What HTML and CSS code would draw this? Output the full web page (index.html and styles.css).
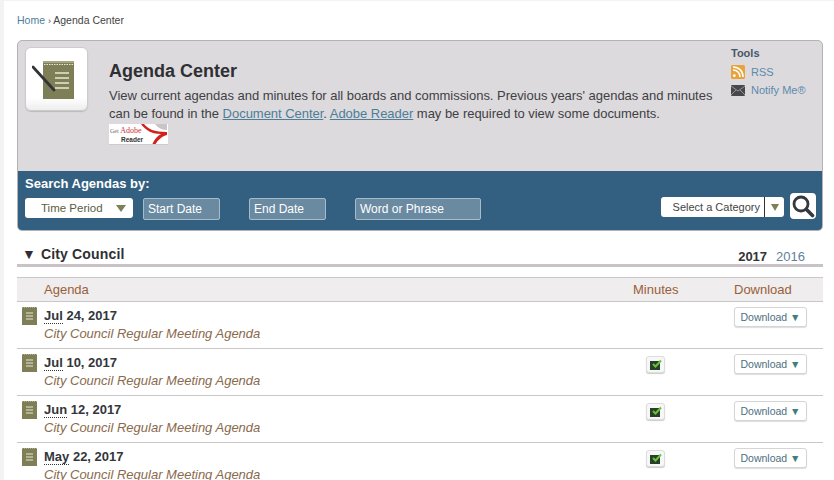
FILE: index.html
```html
<!DOCTYPE html>
<html lang="en">
<head>
  <meta charset="UTF-8">
  <title>Agenda Center</title>
  <link rel="stylesheet" href="styles.css">
</head>
<body>
  <div class="page">
    <p class="breadcrumb"><a href="#">Home</a> <span class="sep">›</span> Agenda Center</p>

    <!-- Top panel -->
    <div class="panel">
      <div class="intro">
        <div class="tile">
          <svg width="50" height="42" viewBox="0 0 50 42">
            <rect x="11" y="3" width="31" height="38" fill="#7f7f57"/>
            <path d="M11 3h31v2H11z" fill="#a5a584"/>
            <path d="M12 6.500h30" stroke="#e8e8d8" stroke-dasharray="1.500 1"/>
            <path d="M23 15h14M23 20h14M23 25h14M23 30h14" stroke="#e9e9d3" stroke-width="1.300"/>
            <path d="M1 9l21 23" stroke="#33333a" stroke-width="2.800" stroke-linecap="round"/>
          </svg>
        </div>
        <div class="intro-text">
          <h1>Agenda Center</h1>
          <p>View current agendas and minutes for all boards and commissions. Previous years' agendas and minutes can be found in the <a href="#">Document Center</a>. <a href="#">Adobe Reader</a> may be required to view some documents.</p>
          <div class="adobe">
            <span class="adobe-get">Get <em>Adobe</em></span>
            <span class="adobe-name">Reader</span>
            <svg class="adobe-swoosh" width="59" height="21" viewBox="0 0 59 21">
              <path d="M35 0c4 5 10 8 23 8v3c-5 1-9 5-12 10h-3c2-5 5-9 9-11-8 0-15-3-20-10z" fill="#d3201f"/>
              <path d="M46 0h12v6c-5 0-9-2-12-6z" fill="#c9c5c5"/>
            </svg>
          </div>
        </div>
        <div class="tools">
          <h2>Tools</h2>
          <a href="#" class="tool">
            <svg width="14" height="14" viewBox="0 0 14 14">
              <rect width="14" height="14" rx="1.500" fill="#e8a33d"/>
              <path d="M2 5c4 0 7 3 7 7M2 2c6 0 10 4 10 10" stroke="#fff" stroke-width="1.600" fill="none"/>
              <circle cx="3.300" cy="10.700" r="1.400" fill="#fff"/>
            </svg>
            RSS
          </a>
          <a href="#" class="tool">
            <svg width="14" height="11" viewBox="0 0 14 11">
              <rect width="14" height="11" rx="1" fill="#48484c"/>
              <path d="M0 1l7 5 7-5M0 10l5-5M14 10L9 5" stroke="#aaa" stroke-width="0.800" fill="none"/>
            </svg>
            Notify Me®
          </a>
        </div>
      </div>

      <div class="search">
        <h3>Search Agendas by:</h3>
        <div class="search-row">
          <div class="period">Time Period <span class="arrow"></span></div>
          <div class="field field-date">Start Date</div>
          <div class="field field-date">End Date</div>
          <div class="field field-word">Word or Phrase</div>
          <div class="category"><span class="category-label">Select a Category</span><span class="category-arrow"><span class="arrow arrow-small"></span></span></div>
          <div class="search-btn">
            <svg width="24" height="24" viewBox="0 0 24 24">
              <circle cx="10" cy="10" r="7" fill="none" stroke="#333a3f" stroke-width="2.800"/>
              <path d="M15.500 15.500l6 6" stroke="#333a3f" stroke-width="3.600" stroke-linecap="round"/>
            </svg>
          </div>
        </div>
      </div>
    </div>

    <!-- City Council -->
    <div class="section-head">
      <h2><span class="toggle">▼</span>City Council</h2>
      <div class="years"><strong>2017</strong><a href="#">2016</a></div>
    </div>

    <table class="agendas">
      <thead>
        <tr>
          <th class="col-agenda">Agenda</th>
          <th class="col-minutes">Minutes</th>
          <th class="col-download">Download</th>
        </tr>
      </thead>
      <tbody>
        <tr>
          <td class="col-agenda">
            <svg class="note" width="15" height="18" viewBox="0 0 15 18"><rect width="15" height="18" fill="#7f7f57"/><path d="M0 .5h15" stroke="#b0b094" stroke-dasharray="1 1"/><path d="M4 6h7M4 9h7M4 12h7" stroke="#e9e9d3"/></svg>
            <div class="date"><abbr>Jul</abbr> 24, 2017</div>
            <div class="title">City Council Regular Meeting Agenda</div>
          </td>
          <td class="col-minutes"></td>
          <td class="col-download"><span class="download">Download <span class="tri">▼</span></span></td>
        </tr>
        <tr>
          <td class="col-agenda">
            <svg class="note" width="15" height="18" viewBox="0 0 15 18"><rect width="15" height="18" fill="#7f7f57"/><path d="M0 .5h15" stroke="#b0b094" stroke-dasharray="1 1"/><path d="M4 6h7M4 9h7M4 12h7" stroke="#e9e9d3"/></svg>
            <div class="date"><abbr>Jul</abbr> 10, 2017</div>
            <div class="title">City Council Regular Meeting Agenda</div>
          </td>
          <td class="col-minutes"><span class="minutes-btn"><svg width="12" height="11" viewBox="0 0 12 11"><rect y="2" width="10" height="9" fill="#26402a"/><path d="M3 5l2.500 2.500L11 1.500" stroke="#6fbf3a" stroke-width="2" fill="none"/></svg></span></td>
          <td class="col-download"><span class="download">Download <span class="tri">▼</span></span></td>
        </tr>
        <tr>
          <td class="col-agenda">
            <svg class="note" width="15" height="18" viewBox="0 0 15 18"><rect width="15" height="18" fill="#7f7f57"/><path d="M0 .5h15" stroke="#b0b094" stroke-dasharray="1 1"/><path d="M4 6h7M4 9h7M4 12h7" stroke="#e9e9d3"/></svg>
            <div class="date"><abbr>Jun</abbr> 12, 2017</div>
            <div class="title">City Council Regular Meeting Agenda</div>
          </td>
          <td class="col-minutes"><span class="minutes-btn"><svg width="12" height="11" viewBox="0 0 12 11"><rect y="2" width="10" height="9" fill="#26402a"/><path d="M3 5l2.500 2.500L11 1.500" stroke="#6fbf3a" stroke-width="2" fill="none"/></svg></span></td>
          <td class="col-download"><span class="download">Download <span class="tri">▼</span></span></td>
        </tr>
        <tr>
          <td class="col-agenda">
            <svg class="note" width="15" height="18" viewBox="0 0 15 18"><rect width="15" height="18" fill="#7f7f57"/><path d="M0 .5h15" stroke="#b0b094" stroke-dasharray="1 1"/><path d="M4 6h7M4 9h7M4 12h7" stroke="#e9e9d3"/></svg>
            <div class="date"><abbr>May</abbr> 22, 2017</div>
            <div class="title">City Council Regular Meeting Agenda</div>
          </td>
          <td class="col-minutes"><span class="minutes-btn"><svg width="12" height="11" viewBox="0 0 12 11"><rect y="2" width="10" height="9" fill="#26402a"/><path d="M3 5l2.500 2.500L11 1.500" stroke="#6fbf3a" stroke-width="2" fill="none"/></svg></span></td>
          <td class="col-download"><span class="download">Download <span class="tri">▼</span></span></td>
        </tr>
      </tbody>
    </table>
  </div>
</body>
</html>
```

FILE: styles.css
```css
html, body {
  height: 480px;
  overflow: hidden;
}
body {
  margin: 0;
  background: #f3f3f3;
  font-family: "Liberation Sans", Arial, sans-serif;
  color: #333;
}
a {
  color: #4d7d97;
}
.page {
  margin: 1px 0 0 4px;
  background: #fff;
  padding: 13px 11px 0 13px;
  height: 466px;
}
.breadcrumb {
  height: 12px;
  margin: 0 0 14px;
  font-size: 10.500px;
  line-height: 12px;
  color: #444;
}
.breadcrumb a {
  color: #4d7d97;
  text-decoration: none;
}
.sep {
  font-size: 9px;
}

/* top panel */
.panel {
  border: 1px solid #b4b2b5;
  border-radius: 5px;
  background: #dcdadd;
  overflow: hidden;
}
.intro {
  display: flex;
  height: 130px;
  padding: 6px 0 0 7px;
  box-sizing: border-box;
}
.tile {
  width: 63px;
  height: 64px;
  flex: none;
  display: flex;
  align-items: center;
  justify-content: center;
  box-sizing: border-box;
  background: linear-gradient(#fff 80%, #eeeeee);
  border: 1px solid #ccc;
  border-radius: 6px;
  box-shadow: 0 1px 1px #bbb;
}
.intro-text {
  width: 612px;
  margin-left: 21px;
  padding-top: 12px;
}
.intro-text h1 {
  margin: 0 0 4px;
  font-size: 18px;
  line-height: 24px;
  color: #2f2f33;
}
.intro-text p {
  margin: 0;
  font-size: 13px;
  line-height: 18px;
  letter-spacing: -0.030px;
  color: #3f3f44;
}
.adobe {
  position: relative;
  width: 59px;
  height: 21px;
  margin-top: 1px;
  padding: 2px 0 0 1px;
  background: #fff;
  border-bottom: 1px solid #ccc;
  box-sizing: border-box;
  overflow: hidden;
}
.adobe-get {
  display: block;
  font-family: "Liberation Serif", serif;
  font-size: 6px;
  line-height: 9px;
  white-space: nowrap;
  color: #666;
}
.adobe-get em {
  font-style: normal;
  font-size: 8px;
  color: #c33;
}
.adobe-name {
  display: block;
  padding-left: 11px;
  font-weight: bold;
  font-size: 6.500px;
  line-height: 8px;
  color: #333;
}
.adobe-swoosh {
  position: absolute;
  left: 0;
  top: 0;
}
.tools {
  margin-left: 10px;
}
.tools h2 {
  margin: 0 0 3px;
  font-size: 11px;
  line-height: 13px;
  color: #475769;
}
.tool {
  display: flex;
  align-items: center;
  gap: 6px;
  height: 18px;
  font-size: 11px;
  color: #5d89ad;
  text-decoration: none;
  white-space: nowrap;
}

/* search bar */
.search {
  height: 59px;
  background: #336080;
  padding: 5px 6px 0 7px;
  box-sizing: border-box;
}
.search h3 {
  margin: 0 0 7px;
  font-size: 13px;
  line-height: 15px;
  color: #fff;
}
.search-row {
  display: flex;
  align-items: flex-start;
}
.period {
  width: 108px;
  height: 20px;
  box-sizing: border-box;
  padding-left: 16px;
  background: #fff;
  border-radius: 3px;
  font-size: 11.500px;
  line-height: 20px;
  color: #5c5c44;
  position: relative;
}
.arrow {
  position: absolute;
  right: 7px;
  top: 7px;
  border-left: 5px solid transparent;
  border-right: 5px solid transparent;
  border-top: 7px solid #7f7f57;
}
.arrow-small {
  right: 5px;
  top: 7px;
  border-left-width: 4px;
  border-right-width: 4px;
}
.field {
  height: 22px;
  box-sizing: border-box;
  padding-left: 4px;
  background: #6a8aa2;
  border: 1px solid #a5bccb;
  border-radius: 2px;
  font-size: 12px;
  line-height: 20px;
  color: #fff;
}
.field-date {
  width: 77px;
  margin-left: 10px;
}
.field-date + .field-date {
  margin-left: 29px;
}
.field-word {
  width: 126px;
  margin-left: 29px;
}
.category {
  display: flex;
  width: 123px;
  height: 20px;
  margin: -1px 0 0 auto;
  background: #fff;
  border-radius: 3px;
  font-size: 11px;
  line-height: 20px;
  color: #444;
}
.category-label {
  width: 104px;
  padding-right: 4px;
  box-sizing: border-box;
  text-align: right;
  white-space: nowrap;
  border-right: 1px solid #333;
}
.category-arrow {
  flex: 1;
  position: relative;
}
.search-btn {
  width: 26px;
  height: 26px;
  margin: -5px 0 0 6px;
  display: flex;
  align-items: center;
  justify-content: center;
  background: #fff;
  border-radius: 4px;
}

/* section */
.section-head {
  display: flex;
  justify-content: space-between;
  align-items: flex-end;
  height: 33px;
  border-bottom: 3px solid #c9c3c8;
}
.section-head h2 {
  margin: 0 0 1px;
  font-size: 14px;
  line-height: 18px;
  letter-spacing: 0.150px;
  color: #2f2f33;
}
.toggle {
  display: inline-block;
  width: 24px;
  padding-left: 5px;
  box-sizing: border-box;
  font-size: 14px;
}
.years {
  font-size: 13px;
  line-height: 14px;
  margin-right: 18px;
}
.years strong {
  color: #333;
}
.years a {
  margin-left: 9px;
  text-decoration: none;
  color: #5f8199;
}

/* agenda table */
.agendas {
  width: 100%;
  margin-top: 10px;
  border-collapse: collapse;
  table-layout: fixed;
}
.agendas th {
  height: 23px;
  padding: 0;
  background: #efeded;
  border-top: 1px solid #c9c7c8;
  border-bottom: 1px solid #c9c7c8;
  font-weight: normal;
  font-size: 13px;
  color: #9a5f3a;
  text-align: left;
}
th.col-agenda {
  padding-left: 27px;
}
.col-minutes {
  width: 101px;
}
.col-download {
  width: 89px;
}
.agendas td {
  height: 47px;
  box-sizing: border-box;
  padding: 0;
  border-bottom: 1px solid #c9c7c8;
  vertical-align: top;
}
td.col-agenda {
  position: relative;
  padding: 6px 0 0 27px;
}
.note {
  position: absolute;
  left: 5px;
  top: 5px;
}
.date {
  font-size: 13px;
  font-weight: bold;
  line-height: 15px;
  color: #33363a;
}
abbr {
  border-bottom: 1px dotted #333;
}
.title {
  margin-top: 2px;
  font-size: 13px;
  font-style: italic;
  line-height: 17px;
  color: #8a6a4c;
}
.minutes-btn {
  display: flex;
  align-items: center;
  justify-content: center;
  width: 19px;
  height: 17px;
  margin: 7px 0 0 13px;
  box-sizing: border-box;
  background: #f7f7f7;
  border: 1px solid #ddd;
  border-radius: 3px;
  box-shadow: 0 1px 1px #ccc;
}
.download {
  display: block;
  width: 73px;
  height: 20px;
  margin-top: 5px;
  box-sizing: border-box;
  background: #fff;
  border: 1px solid #d5d5d5;
  border-radius: 3px;
  box-shadow: 0 1px 1px #ddd;
  font-size: 10.500px;
  line-height: 19px;
  text-align: center;
  color: #4d6f80;
  white-space: nowrap;
}
.tri {
  color: #3f7f7f;
}
```
